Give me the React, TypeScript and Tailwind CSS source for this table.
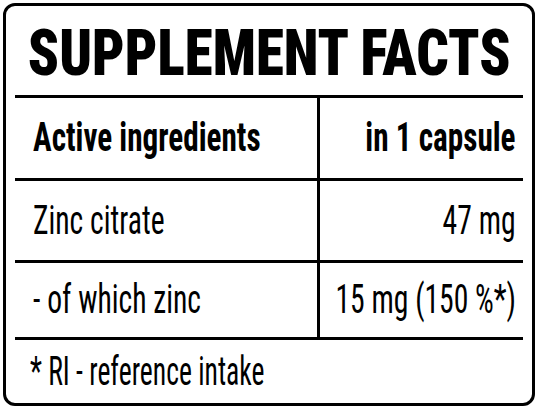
export default function App() {
  const font = "font-[family-name:'Roboto',sans-serif] font-stretch-[75%]";
  const boldLeft = 'inline-block origin-left scale-x-[0.78]';
  const boldRight = 'inline-block origin-right scale-x-[0.78]';
  const left = 'inline-block origin-left scale-x-[0.74]';
  const right = 'inline-block origin-right scale-x-[0.74]';

  return (
    <div className={`h-[411px] w-[540px] bg-white pt-[3px] pl-[3px] text-black ${font}`}>
      <div className="flex h-[403px] w-[532px] flex-col rounded-[12px] border-[3px] border-black px-[9px]">
        <div className="flex h-[89px] items-center justify-center pt-[6px]">
          <h1 className="inline-block shrink-0 scale-x-[0.89] whitespace-nowrap text-[64px] font-black leading-none">
            SUPPLEMENT FACTS
          </h1>
        </div>

        <div className="grid grid-cols-[305px_minmax(0,1fr)] border-t-[3px] border-black text-[40px] leading-none whitespace-nowrap">
          <div className="flex h-[80px] items-center border-r-[3px] border-black pl-[18px] font-bold">
            <span className={boldLeft}>Active ingredients</span>
          </div>
          <div className="flex h-[80px] items-center justify-end pr-[7px] font-bold">
            <span className={boldRight}>in 1 capsule</span>
          </div>

          <div className="flex h-[82px] items-center border-r-[3px] border-t-[3px] border-black pl-[18px]">
            <span className={left}>Zinc citrate</span>
          </div>
          <div className="flex h-[82px] items-center justify-end border-t-[3px] border-black pr-[7px]">
            <span className={right}>47 mg</span>
          </div>

          <div className="flex h-[77px] items-center border-r-[3px] border-t-[3px] border-black pl-[18px]">
            <span className={left}>- of which zinc</span>
          </div>
          <div className="flex h-[77px] items-center justify-end border-t-[3px] border-black pr-[7px]">
            <span className={right}>15 mg (150 %*)</span>
          </div>
        </div>

        <div className="flex flex-1 items-center border-t-[3px] border-black pl-[15px] text-[40px] leading-none whitespace-nowrap">
          <span className="inline-block origin-left scale-x-[0.69]">* RI - reference intake</span>
        </div>
      </div>
    </div>
  );
}
